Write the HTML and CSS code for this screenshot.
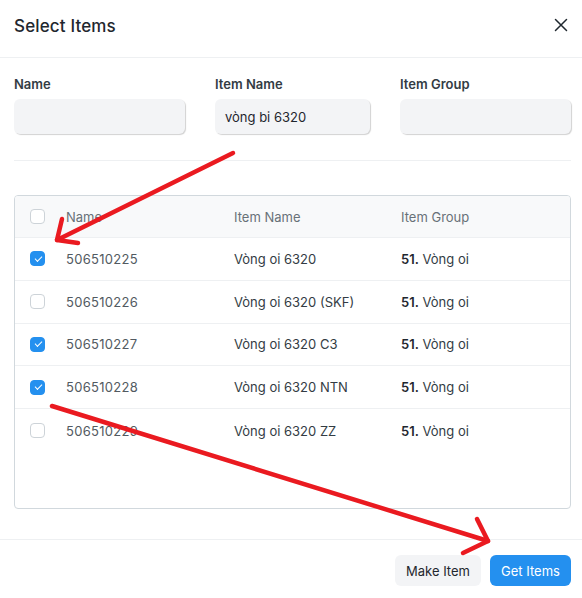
FILE: index.html
```html
<!DOCTYPE html>
<html>
<head>
<meta charset="utf-8">
<link rel="stylesheet" href="styles.css">
</head>
<body>
<div class="modal">
  <div class="modal-header">
    <h4 class="title">Select Items</h4>
    <svg class="close" width="14" height="14" viewBox="0 0 14 14"><path d="M1.5 1.5L12.5 12.5M12.5 1.5L1.5 12.5" stroke="#1f272e" stroke-width="1.5" stroke-linecap="round"/></svg>
  </div>
  <div class="modal-body">
    <div class="filters">
      <div class="field">
        <label>Name</label>
        <div class="input"></div>
      </div>
      <div class="field">
        <label>Item Name</label>
        <div class="input">vòng bi 6320</div>
      </div>
      <div class="field">
        <label>Item Group</label>
        <div class="input"></div>
      </div>
    </div>
    <div class="divider"></div>
    <div class="table">
      <div class="row head">
        <span class="cb"></span>
        <span class="c-name">Name</span>
        <span class="c-item">Item Name</span>
        <span class="c-group">Item Group</span>
      </div>
      <div class="row">
        <span class="cb on"></span>
        <span class="c-name">506510225</span>
        <span class="c-item">Vòng oi 6320</span>
        <span class="c-group"><b>51.</b> Vòng oi</span>
      </div>
      <div class="row">
        <span class="cb"></span>
        <span class="c-name">506510226</span>
        <span class="c-item">Vòng oi 6320 (SKF)</span>
        <span class="c-group"><b>51.</b> Vòng oi</span>
      </div>
      <div class="row">
        <span class="cb on"></span>
        <span class="c-name">506510227</span>
        <span class="c-item">Vòng oi 6320 C3</span>
        <span class="c-group"><b>51.</b> Vòng oi</span>
      </div>
      <div class="row">
        <span class="cb on"></span>
        <span class="c-name">506510228</span>
        <span class="c-item">Vòng oi 6320 NTN</span>
        <span class="c-group"><b>51.</b> Vòng oi</span>
      </div>
      <div class="row last">
        <span class="cb"></span>
        <span class="c-name">506510229</span>
        <span class="c-item">Vòng oi 6320 ZZ</span>
        <span class="c-group"><b>51.</b> Vòng oi</span>
      </div>
    </div>
  </div>
  <div class="modal-footer">
    <button class="btn btn-default">Make Item</button>
    <button class="btn btn-primary">Get Items</button>
  </div>
  <svg class="annot" width="582" height="598" viewBox="0 0 582 598">
    <g stroke="#ea1a20" stroke-width="4.5" stroke-linecap="round" stroke-linejoin="round" fill="none">
      <path d="M233 153L57 240"/>
      <path d="M62 219L57 240L78 243"/>
      <path d="M52 406L488 541"/>
      <path d="M477 519L488 541L463 553"/>
    </g>
  </svg>
</div>
</body>
</html>
```
FILE: styles.css
```css
* { box-sizing: border-box; }
html, body { margin: 0; padding: 0; background: #fff; }
body {
  font-family: Inter, "Noto Sans", "Liberation Sans", sans-serif;
  color: #1f272e;
  width: 582px;
  height: 598px;
  overflow: hidden;
}
.modal { position: relative; width: 582px; height: 598px; }
.modal-header {
  height: 58px;
  display: flex;
  align-items: center;
  justify-content: space-between;
  padding: 0 14px 6px 14px;
  border-bottom: 1px solid #eef0f2;
}
.title { margin: 0; font-size: 17px; font-weight: 500; letter-spacing: 0.15px; }
.close { margin-top: -2px; }
.modal-body { padding: 18px 11px 0 14px; }
.filters {
  display: grid;
  grid-template-columns: 171px 155px 1fr;
  column-gap: 30px;
}
.field label {
  display: block;
  font-size: 13px;
  font-weight: 600;
  color: #333c44;
  line-height: 16px;
  margin-bottom: 7px;
}
.input {
  height: 35px;
  background: #f3f4f6;
  border-radius: 6px;
  box-shadow: 1px 1px 1px rgba(0,0,0,0.18);
  font-size: 13px;
  color: #1f272e;
  padding: 0 10px;
  display: flex;
  align-items: center;
}
.divider { height: 1px; background: #eef0f2; margin-top: 26px; }
.table {
  margin-top: 34px;
  border: 1px solid #d1d8dd;
  border-radius: 4px;
  height: 314px;
  overflow: hidden;
}
.row {
  display: flex;
  align-items: center;
  height: 42.8px;
  border-bottom: 1px solid #eef0f2;
  font-size: 13px;
}
.row.head { height: 42px; background: #f8f9fa; color: #687178; }
.row.last { border-bottom: none; }
.cb {
  width: 15px; height: 15px;
  margin-left: 15px;
  border: 1px solid #cdd3d8;
  border-radius: 4px;
  background: #fff;
  flex: none;
  position: relative;
}
.cb.on { background: #2490ef; border-color: #2490ef; }
.cb.on::after {
  content: "";
  position: absolute;
  left: 4px; top: 3.5px;
  width: 6px; height: 3px;
  border-left: 1.6px solid #fff;
  border-bottom: 1.6px solid #fff;
  transform: rotate(-45deg);
}
.c-name { margin-left: 21px; width: 168px; color: #525a61; letter-spacing: 0.3px; }
.head .c-name { color: #687178; letter-spacing: 0; }
.c-item { width: 167px; color: #333c44; }
.head .c-item { color: #687178; }
.c-group { color: #333c44; }
.head .c-group { color: #687178; }
.c-group b { font-weight: 600; color: #1f272e; }
.modal-footer {
  position: absolute;
  left: 0; right: 0; bottom: 0;
  height: 59px;
  border-top: 1px solid #eef0f2;
  display: flex;
  justify-content: flex-end;
  align-items: flex-start;
  gap: 9px;
  padding: 15px 11px 0 0;
}
.btn {
  font-family: inherit;
  font-size: 13px;
  height: 31px;
  border: none;
  border-radius: 6px;
  padding: 0 10px;
  cursor: pointer;
}
.btn-default { background: #f3f4f6; color: #1f272e; width: 86px; }
.btn-primary { background: #2490ef; color: #fff; width: 81px; }
.annot { position: absolute; left: 0; top: 0; pointer-events: none; }
```
